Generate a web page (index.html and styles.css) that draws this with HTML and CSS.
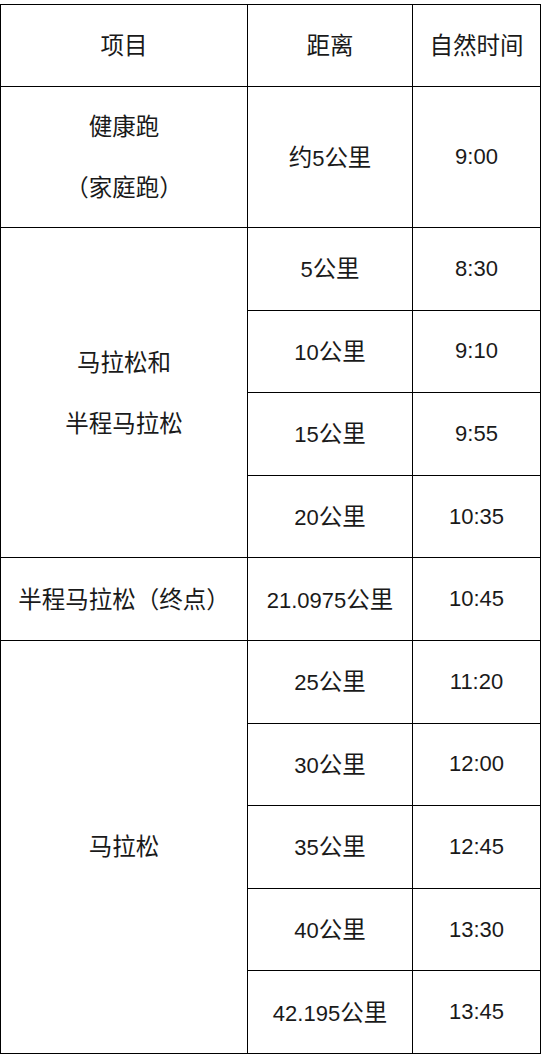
FILE: index.html
```html
<!DOCTYPE html>
<html lang="zh-CN">
<head>
<meta charset="utf-8">
<title>马拉松时间表</title>
<link rel="stylesheet" href="styles.css">
</head>
<body>
<table class="schedule">
  <colgroup>
    <col class="c1"><col class="c2"><col class="c3">
  </colgroup>
  <tr class="head">
    <td><span class="zh">项目</span></td><td><span class="zh">距离</span></td><td><span class="zh">自然时间</span></td>
  </tr>
  <tr class="tall">
    <td><div class="two"><span class="zh">健康跑</span><br><span class="zh">（家庭跑）</span></div></td><td><span class="zh">约</span>5<span class="zh">公里</span></td><td>9:00</td>
  </tr>
  <tr class="row">
    <td rowspan="4"><div class="two"><span class="zh">马拉松和</span><br><span class="zh">半程马拉松</span></div></td><td>5<span class="zh">公里</span></td><td>8:30</td>
  </tr>
  <tr class="row"><td>10<span class="zh">公里</span></td><td>9:10</td></tr>
  <tr class="row"><td>15<span class="zh">公里</span></td><td>9:55</td></tr>
  <tr class="row"><td>20<span class="zh">公里</span></td><td>10:35</td></tr>
  <tr class="row"><td><span class="zh">半程马拉松（终点）</span></td><td>21.0975<span class="zh">公里</span></td><td>10:45</td></tr>
  <tr class="row">
    <td rowspan="5"><span class="zh">马拉松</span></td><td>25<span class="zh">公里</span></td><td>11:20</td>
  </tr>
  <tr class="row"><td>30<span class="zh">公里</span></td><td>12:00</td></tr>
  <tr class="row"><td>35<span class="zh">公里</span></td><td>12:45</td></tr>
  <tr class="row"><td>40<span class="zh">公里</span></td><td>13:30</td></tr>
  <tr class="row"><td>42.195<span class="zh">公里</span></td><td>13:45</td></tr>
</table>
</body>
</html>
```
FILE: styles.css
```css
html, body {
  margin: 0;
  padding: 0;
  background: #ffffff;
}
body {
  padding-top: 4px;
  font-family: "Liberation Sans", "Noto Sans CJK SC", sans-serif;
  font-size: 22px;
  color: #1a1a1a;
}
.schedule {
  border-collapse: collapse;
  table-layout: fixed;
  width: 540px;
}
.c1 { width: 247px; }
.c2 { width: 165px; }
.c3 { width: 128px; }
.schedule td {
  border: 1px solid #000;
  text-align: center;
  vertical-align: middle;
  padding: 0;
  line-height: 26px;
  white-space: nowrap;
}
.zh {
  font-family: "Noto Sans CJK SC", sans-serif;
  font-size: 23.5px;
}
.head { height: 82px; }
.tall { height: 141px; }
.row { height: 82.6px; }
.two { line-height: 58px; }
```
